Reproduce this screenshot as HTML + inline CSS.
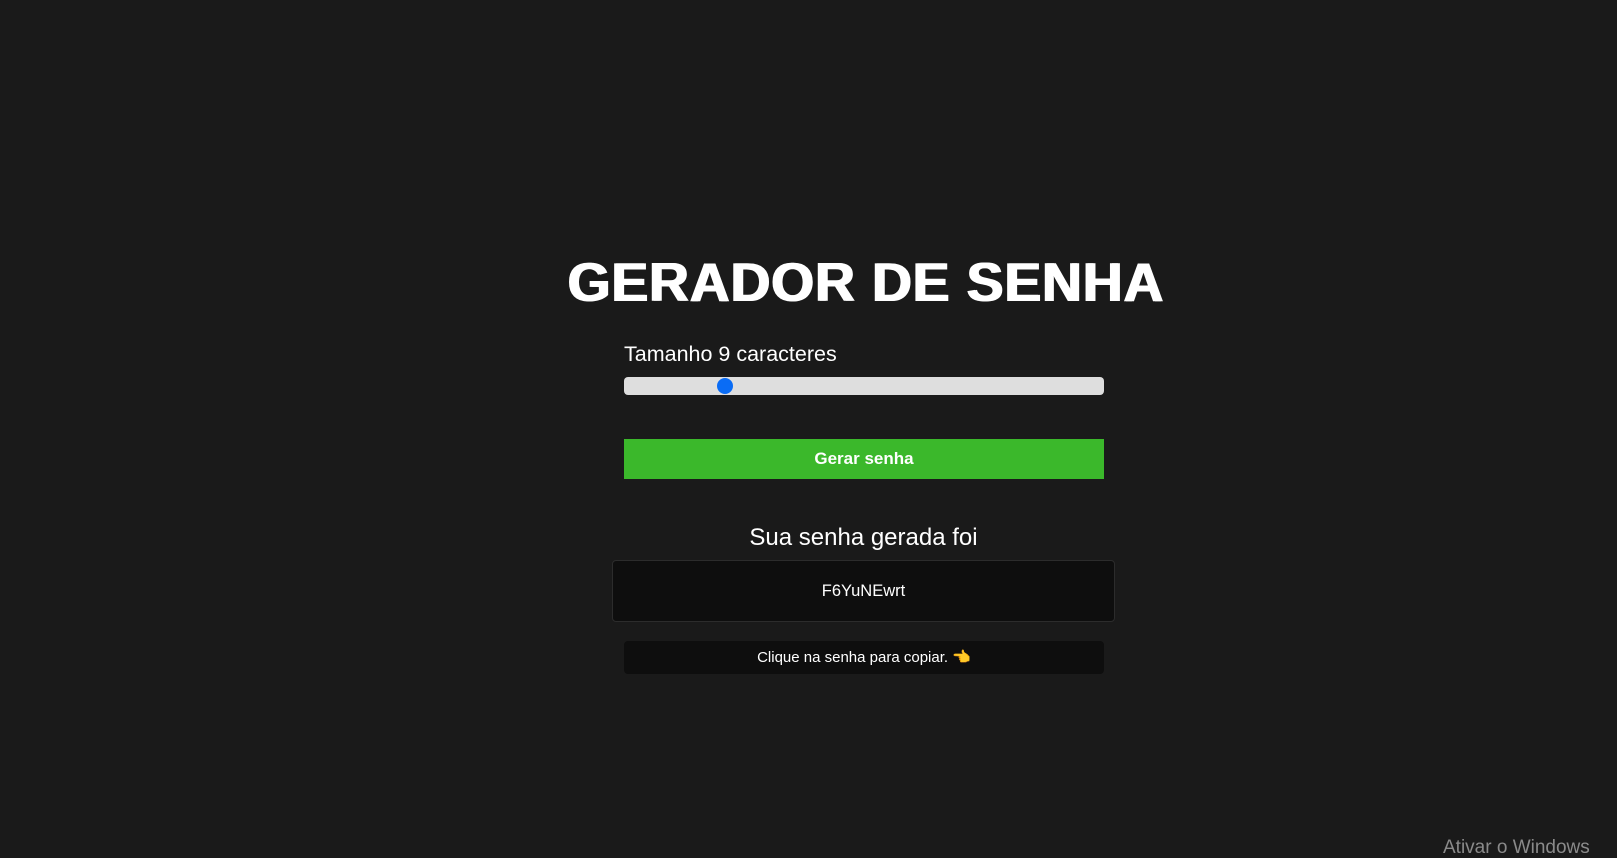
<!DOCTYPE html>
<html><head><meta charset="utf-8"><style>
html,body{margin:0;padding:0;background:#1a1a1a;width:1617px;height:858px;overflow:hidden;font-family:"Liberation Sans",sans-serif;color:#fff;position:relative}
.t{position:absolute;left:560px;width:610px;top:250px;text-align:center;font-weight:900;font-size:55px;letter-spacing:1px;line-height:64px;white-space:nowrap;text-shadow:2px 0 0 #fff}
.lbl{position:absolute;left:624px;top:342px;font-size:21.5px}
.sl{position:absolute;left:624px;top:377px;width:480px;height:18px;background:#dedede;border-radius:4px}
.th{position:absolute;left:717px;top:378px;width:16px;height:16px;border-radius:50%;background:#0a6cf5}
.btn{position:absolute;left:624px;top:439px;width:480px;height:40px;background:#3bb82b;font-weight:bold;font-size:17px;text-align:center;line-height:40px}
.h2{position:absolute;left:612px;width:503px;top:524px;text-align:center;font-size:24px}
.box{position:absolute;left:612px;top:560px;width:501px;height:60px;background:#0e0e0e;border:1px solid #2c2c2c;border-radius:4px;text-align:center;line-height:60px;font-size:16.5px}
.hint{position:absolute;left:624px;top:641px;width:480px;height:33px;background:#0e0e0e;border-radius:4px;text-align:center;line-height:33px;font-size:15px}
.w{position:absolute;left:1443px;top:837px;font-size:19px;color:#8a8a8a}
</style></head><body>
<div class="t">GERADOR DE SENHA</div>
<div class="lbl">Tamanho 9 caracteres</div>
<div class="sl"></div><div class="th"></div>
<div class="btn">Gerar senha</div>
<div class="h2">Sua senha gerada foi</div>
<div class="box">F6YuNEwrt</div>
<div class="hint">Clique na senha para copiar. <span style="color:#f0b429">👈</span></div>
<div class="w">Ativar o Windows</div>
</body></html>
